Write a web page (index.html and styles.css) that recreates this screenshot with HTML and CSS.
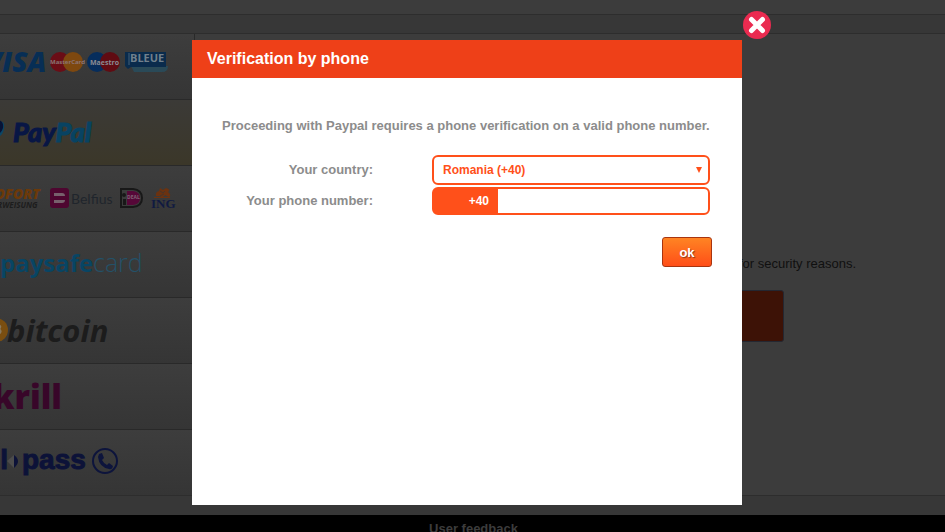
FILE: index.html
```html
<!DOCTYPE html>
<html lang="en">
<head>
<meta charset="utf-8">
<title>Verification by phone</title>
<link rel="stylesheet" href="styles.css">
</head>
<body>
<div class="page">
  <div class="topbar"></div>
  <div class="strip strip-top"></div>
  <div class="content">
    <nav class="methods">
      <a class="method" href="#cards">
        <svg class="logo" viewBox="0 0 192 65" role="img" aria-label="Cards">
          <text class="visa" x="-15" y="38">VISA</text>
          <circle cx="60" cy="28" r="10" fill="#6a0d16"/><circle cx="73" cy="28" r="10" fill="#7e480f"/>
          <text class="mini" x="50" y="30">MasterCard</text>
          <circle cx="97" cy="28" r="10" fill="#062d5c"/><circle cx="110" cy="28" r="10" fill="#600b12"/>
          <text class="maestro" x="90" y="31">Maestro</text>
          <path d="M131 32h37q0 6-6 6h-28z" fill="#2a4a58"/>
          <path d="M125 18h41v15h-35l-3 2-3-3z" fill="#0a2b4c"/>
          <path d="M129 19v12" stroke="#436079" fill="none"/>
          <text class="bleue" x="130" y="28">BLEUE</text>
        </svg>
      </a>
      <a class="method selected" href="#paypal">
        <svg class="logo" viewBox="0 0 192 65" role="img" aria-label="PayPal">
          <path d="M-4 24q9-6 8 4-1 9-8 9z" fill="#0b4666"/>
          <path d="M-6 20h5q5 2 4 8-2 7-9 6z" fill="#071336"/>
          <text class="paypal" x="13" y="42"><tspan class="pay-dark">Pay</tspan><tspan class="pay-light">Pal</tspan></text>
        </svg>
      </a>
      <a class="method" href="#banks">
        <svg class="logo" viewBox="0 0 192 65" role="img" aria-label="Bank transfer">
          <text class="sofort" x="-13" y="33">SOFORT</text>
          <text class="weisung" x="-12" y="42">BERWEISUNG</text>
          <rect x="50" y="22" width="19" height="20" rx="3" fill="#4e0630"/>
          <path d="M54 27h8q3 0 3 3h-11zM54 34h11q0 3-3 3h-8z" fill="#77606c"/>
          <text class="belfius" x="71" y="38">Belfius</text>
          <path d="M121 23h12q9 1 9 9t-9 9h-12z" fill="#3b3b3b" stroke="#181818" stroke-width="2"/>
          <path d="M127 25h6q7 1 7 7t-7 7h-6z" fill="#560738"/>
          <circle cx="124" cy="29" r="2" fill="#181818"/><path d="M123 33h3v6h-3z" fill="#181818"/>
          <text class="ideal" x="127" y="33">DEAL</text>
          <path d="M156 30q-1-4 3-5l1-3 3 2 3-2q5 1 2 4 4 3 1 5l-4-2-3 3-2-2zM154 31h16v1h-16z" fill="#6b3210"/>
          <path d="M160 25l3 2 2-2M160 30l4-2" stroke="#45352b" fill="none"/>
          <text class="ing" x="151" y="42">ING</text>
        </svg>
      </a>
      <a class="method" href="#paysafecard">
        <svg class="logo" viewBox="0 0 192 65" role="img" aria-label="paysafecard">
          <text class="paysafe" x="0" y="40">paysafe</text>
          <text class="card" x="93" y="40">card</text>
        </svg>
      </a>
      <a class="method" href="#bitcoin">
        <svg class="logo" viewBox="0 0 192 65" role="img" aria-label="bitcoin">
          <circle cx="-4" cy="32" r="12" fill="#7a4e10"/>
          <path d="M-2 27q4 1 1 4 4 3-2 6" stroke="#88785d" stroke-width="2" fill="none"/>
          <text class="bitcoin" x="7" y="44">bitcoin</text>
        </svg>
      </a>
      <a class="method" href="#skrill">
        <svg class="logo" viewBox="0 0 192 65" role="img" aria-label="Skrill">
          <text class="skrill" x="62" y="45">Skrill</text>
        </svg>
      </a>
      <a class="method" href="#allopass">
        <svg class="logo" viewBox="0 0 192 65" role="img" aria-label="allopass">
          <text class="pass all" x="8" y="39">all</text>
          <path d="M14 25v13l-7-7z" fill="#4c4c4c"/><path d="M14 25q8 6 0 13z" fill="#0c1238"/>
          <text class="pass" x="22" y="39">pass</text>
          <circle cx="105" cy="31" r="12" fill="none" stroke="#0d143c" stroke-width="2"/>
          <path d="M99 24l3-1 2 5-2 2q2 4 5 5l2-2 4 3q-1 4-4 3-10-2-11-12z" fill="#0d143c"/>
        </svg>
      </a>
    </nav>
    <main class="checkout">
      <p class="note">for security reasons.</p>
      <button class="pay" type="button" aria-label="Pay"></button>
    </main>
  </div>
  <div class="strip"></div>
  <footer class="footer">User feedback</footer>
</div>

<div class="overlay">
  <section class="modal" role="dialog" aria-labelledby="title">
    <header class="modal-head"><h1 id="title">Verification by phone</h1></header>
    <button class="close" type="button" aria-label="Close">
      <svg viewBox="0 0 28 28"><circle cx="14" cy="14" r="14" fill="#ea2b50"/><path d="M8.500 8.500l11 11M19.500 8.500l-11 11" stroke="#fff" stroke-width="5" stroke-linecap="round"/></svg>
    </button>
    <form class="form">
      <p class="intro">Proceeding with Paypal requires a phone verification on a valid phone number.</p>
      <div class="field">
        <label for="country">Your country:</label>
        <div class="select-wrap">
          <select id="country"><option>Romania (+40)</option></select>
          <svg class="arrow" viewBox="0 0 6 6"><path d="M0 0h6L3 6z" fill="#ff501a"/></svg>
        </div>
      </div>
      <div class="field">
        <label for="phone">Your phone number:</label>
        <div class="phone"><span class="prefix">+40</span><input id="phone" type="tel"></div>
      </div>
      <button class="ok" type="button">ok</button>
    </form>
  </section>
</div>
</body>
</html>
```
FILE: styles.css
```css
* { box-sizing: border-box; }
html, body { height: 100%; }
body {
  margin: 0;
  overflow: hidden;
  background: #000;
  font: 13px/16px "Liberation Sans", Arial, sans-serif;
}

/* Dimmed page */
.page { display: flex; flex-direction: column; }
.topbar { height: 14px; background: #3c3c3c; }
.strip { height: 20px; background: #373737; border-top: 1px solid #2d2d2d; }
.strip-top { height: 19px; }
.content {
  display: flex;
  background: #3c3c3c;
  border-top: 1px solid #2d2d2d;
}
.methods { width: 195px; flex: none; border-right: 1px solid #292929; }
.method {
  display: block;
  height: 66px;
  overflow: hidden;
  border-bottom: 1px solid #292929;
  background: linear-gradient(#3d3d3d, #353535);
}
.method:last-child { height: 65px; border-bottom: 0; }
.method.selected { background: linear-gradient(#3b3a37, #3b3729); }
.logo { display: block; width: 192px; height: 65px; }
.logo text { font-family: "Open Sans", sans-serif; font-weight: 700; }
.logo .visa { font-size: 28px; font-style: italic; font-weight: 800; fill: #072e55; }
.logo .mini { font-size: 6px; fill: #8b7474; }
.logo .maestro { font-size: 7px; fill: #8b8b93; }
.logo .bleue { font-size: 11px; fill: #71808c; }
.logo .paypal { font: italic 900 27px Lato, sans-serif; stroke-width: 1px; }
.pay-dark { fill: #081645; stroke: #081645; }
.pay-light { fill: #084362; stroke: #084362; }
.logo .sofort { font-size: 14px; font-style: italic; font-weight: 800; fill: #6c3909; }
.logo .weisung { font-size: 8px; font-style: italic; fill: #1d1d1d; }
.logo .belfius { font-size: 14px; font-weight: 400; font-family: "Liberation Sans Narrow", Lato, sans-serif; fill: #20252c; }
.logo .ideal { font-size: 5px; fill: #806274; }
.logo .ing { font: 700 13px "Liberation Serif", serif; fill: #101a40; }
.logo .paysafe { font-size: 24px; fill: #084564; }
.logo .card { font-size: 25px; font-weight: 300; fill: #245168; }
.logo .bitcoin { font: italic 700 31px "Open Sans", sans-serif; fill: #1c1c1c; }
.logo .skrill { font-size: 33px; font-weight: 800; text-anchor: end; fill: #380629; }
.logo .pass { font: 700 28px "Liberation Sans", sans-serif; fill: #0c1238; stroke: #0c1238; stroke-width: 1px; }
.logo .all { text-anchor: end; }

.checkout {
  flex: 1;
  display: flex;
  flex-direction: column;
  align-items: flex-end;
  padding: 222px 89px 0 0;
}
.note { margin: 0 0 18px; color: #101010; }
.pay {
  width: 120px;
  height: 52px;
  margin-right: 72px;
  border: 1px solid #242731;
  border-radius: 3px;
  background: #3d1206;
}
.footer {
  padding: 6px 0 0 2px;
  text-align: center;
  color: #3c3c3c;
  font-weight: 700;
}

/* Dialog */
.overlay {
  position: absolute;
  inset: 0;
  display: flex;
  justify-content: center;
  align-items: flex-start;
  padding: 40px 11px 0 0;
}
.modal {
  position: relative;
  width: 550px;
  min-height: 465px;
  background: #fff;
  color: #8c8c8c;
  font-weight: 700;
}
.modal-head { padding: 9px 15px; background: #ee4018; }
.modal-head h1 { margin: 0; color: #fff; font-size: 16px; line-height: 20px; }
.close {
  position: absolute;
  top: -29px;
  right: -29px;
  width: 28px;
  height: 28px;
  padding: 0;
  border: 0;
  background: none;
}
.close svg { display: block; }
.form {
  display: flex;
  flex-direction: column;
  gap: 2px;
  padding: 40px 32px 0 30px;
}
.intro { margin: 0 0 19px; white-space: nowrap; }
.field {
  display: grid;
  grid-template-columns: 151px 278px;
  justify-content: space-between;
  align-items: center;
}
.field label { text-align: right; }
.select-wrap { position: relative; }
.select-wrap select {
  display: block;
  width: 100%;
  height: 30px;
  padding: 0 9px;
  appearance: none;
  border: 2px solid #ff501a;
  border-radius: 6px;
  background: #fff;
  color: #ff501a;
  font: 700 12px "Liberation Sans", Arial, sans-serif;
}
.arrow { position: absolute; top: 12px; right: 8px; width: 6px; height: 6px; }
.phone {
  display: flex;
  height: 28px;
  overflow: hidden;
  border: 2px solid #ff501a;
  border-radius: 6px;
  background: #ff501a;
}
.prefix {
  width: 64px;
  padding-right: 9px;
  text-align: right;
  color: #fff;
  font-size: 12px;
  line-height: 24px;
}
.phone input {
  flex: 1;
  min-width: 0;
  padding: 0 8px;
  border: 0;
  background: #fff;
  font: inherit;
}
.ok {
  align-self: flex-end;
  width: 50px;
  height: 30px;
  margin: 20px -2px 0 0;
  padding: 0;
  border: 1px solid #a8340f;
  border-radius: 3px;
  background: linear-gradient(#ff8423, #ff4e18);
  color: #fff;
  font: 700 13px "Liberation Sans", Arial, sans-serif;
  text-shadow: 1px 1px 1px #8b3a16;
}
```
